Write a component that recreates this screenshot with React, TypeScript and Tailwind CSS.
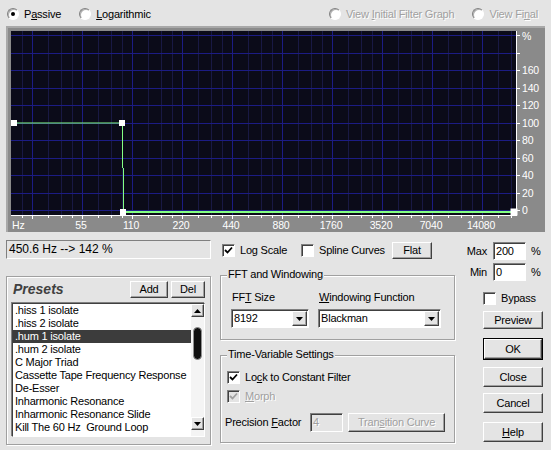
import React from 'react';

const raised =
  'border border-t-white border-l-white border-r-[#404040] border-b-[#404040] shadow-[inset_-1px_-1px_0_#a0a0a0] bg-[#e4e4e4]';
const sunken =
  'border border-t-[#808080] border-l-[#808080] border-r-white border-b-white shadow-[inset_1px_1px_0_#404040]';
const etched = 'border border-[#a0a0a0] shadow-[inset_1px_1px_0_#fff,1px_1px_0_#fff]';
const dim = 'text-[#a0a0a0] [text-shadow:1px_1px_0_#fff]';

const presets = [
  '.hiss 1 isolate',
  '.hiss 2 isolate',
  '.hum 1 isolate',
  '.hum 2 isolate',
  'C Major Triad',
  'Cassette Tape Frequency Response',
  'De-Esser',
  'Inharmonic Resonance',
  'Inharmonic Resonance Slide',
  'Kill The 60 Hz  Ground Loop',
  'Kill The Hiss & Fan Noise',
];

function Radio({ checked, disabled, children }: { checked?: boolean; disabled?: boolean; children: React.ReactNode }) {
  return (
    <div className="flex items-center gap-[5px]">
      <span className="flex h-[12px] w-[12px] items-center justify-center rounded-full border border-t-[#808080] border-l-[#808080] border-r-white border-b-white bg-white shadow-[inset_1px_1px_0_#b0b0b0]">
        {checked && <span className="h-[4px] w-[4px] rounded-full bg-black" />}
      </span>
      <span className={disabled ? dim : ''}>{children}</span>
    </div>
  );
}

function Check({ checked, disabled, children }: { checked?: boolean; disabled?: boolean; children: React.ReactNode }) {
  return (
    <div className="flex items-center gap-[5px]">
      <span className={`flex h-[13px] w-[13px] items-center justify-center ${sunken} ${disabled ? 'bg-[#e4e4e4]' : 'bg-white'}`}>
        {checked && (
          <svg width="9" height="9" viewBox="0 0 9 9">
            <path d="M1 4 L3.5 6.5 L8 1.5" stroke={disabled ? '#a0a0a0' : '#000'} strokeWidth="1.8" fill="none" />
          </svg>
        )}
      </span>
      <span className={disabled ? dim : ''}>{children}</span>
    </div>
  );
}

function Arrow({ up }: { up?: boolean }) {
  return (
    <svg width="7" height="4" viewBox="0 0 7 4">
      <path d={up ? 'M0 4h7L3.5 0z' : 'M0 0h7L3.5 4z'} fill="#000" />
    </svg>
  );
}

function Select({ value, className }: { value: string; className: string }) {
  return (
    <div className={`flex h-[19px] items-center bg-white ${sunken} ${className}`}>
      <span className="flex-1 pl-[2px]">{value}</span>
      <span className={`mr-[1px] flex h-[15px] w-[15px] items-center justify-center ${raised}`}>
        <Arrow />
      </span>
    </div>
  );
}

function Graph() {
  const majors = Array.from({ length: 10 }, (_, k) => 32 + 50 * k);
  const minors: number[] = [];
  for (let k = -1; k < 10; k++)
    for (const o of [16, 29, 40]) {
      const x = 32 + 50 * k + o;
      if (x > 12 && x < 515) minors.push(x);
    }
  const rows = Array.from({ length: 11 }, (_, k) => Math.round(210 - 17.5 * k));
  const freq = ['55', '110', '220', '440', '880', '1760', '3520', '7040', '14080'];
  const pct = ['0', '20', '40', '60', '80', '100', '120', '140', '160', '', '%'];
  const handles = [
    [14, 123],
    [122, 123],
    [123, 212],
    [513.5, 211.5],
  ];

  return (
    <div className="mx-[6px] h-[206px] bg-[#8a8a8a] shadow-[inset_2px_2px_0_#a8a8a8]">
      <svg width="538" height="206" viewBox="6 26 538 206" className="block" fontFamily="Liberation Sans, Arial, sans-serif">
        <rect x="11" y="31" width="505" height="184" fill="#0b0b19" />
        {minors.map((x) => (
          <line key={'m' + x} x1={x + 0.5} x2={x + 0.5} y1={31} y2={215} stroke="#191944" />
        ))}
        {majors.map((x) => (
          <line key={'M' + x} x1={x + 0.5} x2={x + 0.5} y1={31} y2={215} stroke="#1c1c84" />
        ))}
        {rows.map((y) => (
          <line key={'h' + y} x1={11} x2={516} y1={y + 0.5} y2={y + 0.5} stroke="#1c1c84" />
        ))}

        {/* axes */}
        <line x1={11} x2={517} y1={215.5} y2={215.5} stroke="#fff" />
        <line x1={516.5} x2={516.5} y1={31} y2={216} stroke="#fff" />
        {majors.map((x) => (
          <line key={'tM' + x} x1={x + 0.5} x2={x + 0.5} y1={216} y2={219} stroke="#fff" />
        ))}
        {minors.map((x) => (
          <line key={'tm' + x} x1={x + 0.5} x2={x + 0.5} y1={216} y2={218} stroke="#fff" />
        ))}
        {rows.map((y) => (
          <line key={'ty' + y} x1={517} x2={520} y1={y + 0.5} y2={y + 0.5} stroke="#fff" />
        ))}
        <text x={12} y={229} fontSize="10.5" fill="#fff">
          Hz
        </text>
        {freq.map((t, i) => (
          <text key={t} x={majors[i + 1] - 1} y={229} fontSize="10.5" fill="#fff" textAnchor="middle">
            {t}
          </text>
        ))}
        {pct.map((t, i) =>
          t ? (
            <text key={'p' + i} x={522} y={rows[i] + (t === '%' ? 5 : 4)} fontSize="10.5" fill="#fff">
              {t}
            </text>
          ) : null
        )}

        {/* filter curve */}
        <line x1={14} x2={122} y1={123} y2={123} stroke="#84ff84" strokeWidth="1.2" />
        <line x1={122.5} x2={122.5} y1={123} y2={168} stroke="#84ff84" strokeWidth="1" />
        <line x1={123.5} x2={123.5} y1={168} y2={212} stroke="#84ff84" strokeWidth="1" />
        <line x1={123} x2={513} y1={212} y2={212} stroke="#84ff84" strokeWidth="2" />
        {handles.map(([x, y], i) => (
          <rect key={'hd' + i} x={x - 3} y={y - 3} width={i === 3 ? 7 : 6} height={i === 3 ? 7 : 6} fill="#fff" />
        ))}
      </svg>
    </div>
  );
}

export default function App() {
  return (
    <div className="h-[450px] w-[551px] overflow-hidden bg-[#e4e4e4] font-['Liberation_Sans',Arial,sans-serif] text-[11px] leading-[13px] tracking-[-0.2px] text-black">
      {/* Top radio row */}
      <div className="flex h-[26px] items-center pl-[7px] pr-[13px] pt-[2px]">
        <Radio checked>
          P<u className="underline">a</u>ssive
        </Radio>
        <div className="ml-[18px]">
          <Radio>
            <u className="underline">L</u>ogarithmic
          </Radio>
        </div>
        <div className="ml-auto flex items-center gap-[18px]">
          <Radio disabled>
            View <u className="underline">I</u>nitial Filter Graph
          </Radio>
          <Radio disabled>
            View Fi<u className="underline">n</u>al
          </Radio>
        </div>
      </div>

      <Graph />

      <div className="flex">
        {/* Left column */}
        <div className="ml-[6px] flex w-[205px] flex-col">
          <div className="mt-[8px] h-[19px] border border-t-[#808080] border-l-[#808080] border-r-white border-b-white pl-[2px] text-[12px] leading-[17px] tracking-normal">
            450.6 Hz --&gt; 142 %
          </div>
          <div className={`mt-[17px] flex h-[169px] flex-col ${etched}`}>
            <div className="mt-[4px] flex h-[17px] items-center">
              <span className="ml-[6px] text-[14px] font-bold italic tracking-normal text-[#404040]">Presets</span>
              <button className={`ml-auto h-[17px] w-[38px] leading-[13px] ${raised}`}>Add</button>
              <button className={`ml-[3px] mr-[5px] h-[17px] w-[34px] leading-[13px] ${raised}`}>Del</button>
            </div>
            <div className="ml-[5px] mt-[5px] flex h-[134px] w-[193px] overflow-hidden border border-t-[#404040] border-l-[#404040] border-r-white border-b-white bg-white shadow-[-1px_-1px_0_#808080]">
              <div className="flex flex-1 flex-col overflow-hidden">
                {presets.map((t, i) => (
                  <div
                    key={t}
                    className={`h-[13px] shrink-0 whitespace-pre pl-[2px] leading-[13px] ${i === 2 ? 'bg-[#3c3c3c] text-white' : ''}`}
                  >
                    {t}
                  </div>
                ))}
              </div>
              <div className="flex w-[13px] flex-col bg-[#f4f4f4]">
                <div className={`flex h-[13px] items-center justify-center ${raised}`}>
                  <Arrow up />
                </div>
                <div className="flex-1">
                  <div className="mx-auto mt-[10px] h-[33px] w-[9px] rounded-[5px] border border-[#909090] bg-[#101010]" />
                </div>
                <div className={`mb-[6px] flex h-[13px] items-center justify-center ${raised}`}>
                  <Arrow />
                </div>
              </div>
            </div>
          </div>
        </div>

        {/* Middle column */}
        <div className="ml-[9px] flex w-[235px] flex-col">
          <div className="mt-[10px] flex h-[17px] items-center pl-[2px]">
            <div className="w-[79px]">
              <Check checked>Log Scale</Check>
            </div>
            <div className="w-[91px]">
              <Check>Spline Curves</Check>
            </div>
            <button className={`h-[17px] w-[40px] leading-[13px] ${raised}`}>Flat</button>
          </div>

          <div className={`relative mt-[16px] h-[65px] ${etched}`}>
            <span className="absolute -top-[8px] left-[6px] bg-[#e4e4e4] px-[1px] leading-[13px]">FFT and Windowing</span>
            <div className="flex gap-[9px] pl-[10px] pt-[15px]">
              <div className="flex flex-col">
                <span className="pl-[1px]">
                  FF<u className="underline">T</u> Size
                </span>
                <Select value="8192" className="mt-[5px] w-[78px]" />
              </div>
              <div className="flex flex-col">
                <span className="pl-[1px]">
                  <u className="underline">W</u>indowing Function
                </span>
                <Select value="Blackman" className="mt-[5px] w-[123px]" />
              </div>
            </div>
          </div>

          <div className={`relative mt-[15px] h-[88px] ${etched}`}>
            <span className="absolute -top-[8px] left-[6px] bg-[#e4e4e4] px-[1px] leading-[13px]">Time-Variable Settings</span>
            <div className="flex flex-col pt-[15px]">
              <div className="pl-[6px]">
                <Check checked>
                  Lo<u className="underline">c</u>k to Constant Filter
                </Check>
              </div>
              <div className="mt-[6px] pl-[6px]">
                <Check checked disabled>
                  <u className="underline">M</u>orph
                </Check>
              </div>
              <div className="mt-[10px] flex h-[19px] items-center pl-[4px]">
                <span className="w-[85px]">
                  Precision <u className="underline">F</u>actor
                </span>
                <div className={`h-[19px] w-[33px] pl-[2px] leading-[17px] ${sunken} ${dim}`}>4</div>
                <button className={`ml-[5px] h-[19px] w-[97px] leading-[15px] ${raised} ${dim}`}>
                  Tran<u className="underline">s</u>ition Curve
                </button>
              </div>
            </div>
          </div>
        </div>

        {/* Right column */}
        <div className="ml-[11px] flex w-[80px] flex-col">
          <div className="mt-[10px] flex h-[18px] items-center">
            <span className="mr-[6px] w-[21px] text-right">Max</span>
            <div className={`h-[18px] w-[33px] bg-white pl-[2px] leading-[16px] ${sunken}`}>200</div>
            <span className="ml-[5px]">%</span>
          </div>
          <div className="mt-[3px] flex h-[18px] items-center">
            <span className="mr-[6px] w-[21px] text-right">Min</span>
            <div className={`h-[18px] w-[33px] bg-white pl-[2px] leading-[16px] ${sunken}`}>0</div>
            <span className="ml-[5px]">%</span>
          </div>
          <div className="mt-[11px] pl-[17px]">
            <Check>Bypass</Check>
          </div>
          <button className={`ml-[17px] mt-[6px] h-[18px] w-[60px] leading-[14px] ${raised}`}>Preview</button>
          <div className="ml-[17px] mt-[9px] h-[22px] w-[60px] border border-black">
            <button className={`h-full w-full leading-[16px] ${raised}`}>OK</button>
          </div>
          <button className={`ml-[17px] mt-[7px] h-[20px] w-[60px] leading-[16px] ${raised}`}>Close</button>
          <button className={`ml-[17px] mt-[6px] h-[20px] w-[60px] leading-[16px] ${raised}`}>Cancel</button>
          <button className={`ml-[17px] mt-[9px] h-[20px] w-[60px] leading-[16px] ${raised}`}>
            <u className="underline">H</u>elp
          </button>
        </div>
      </div>
    </div>
  );
}
